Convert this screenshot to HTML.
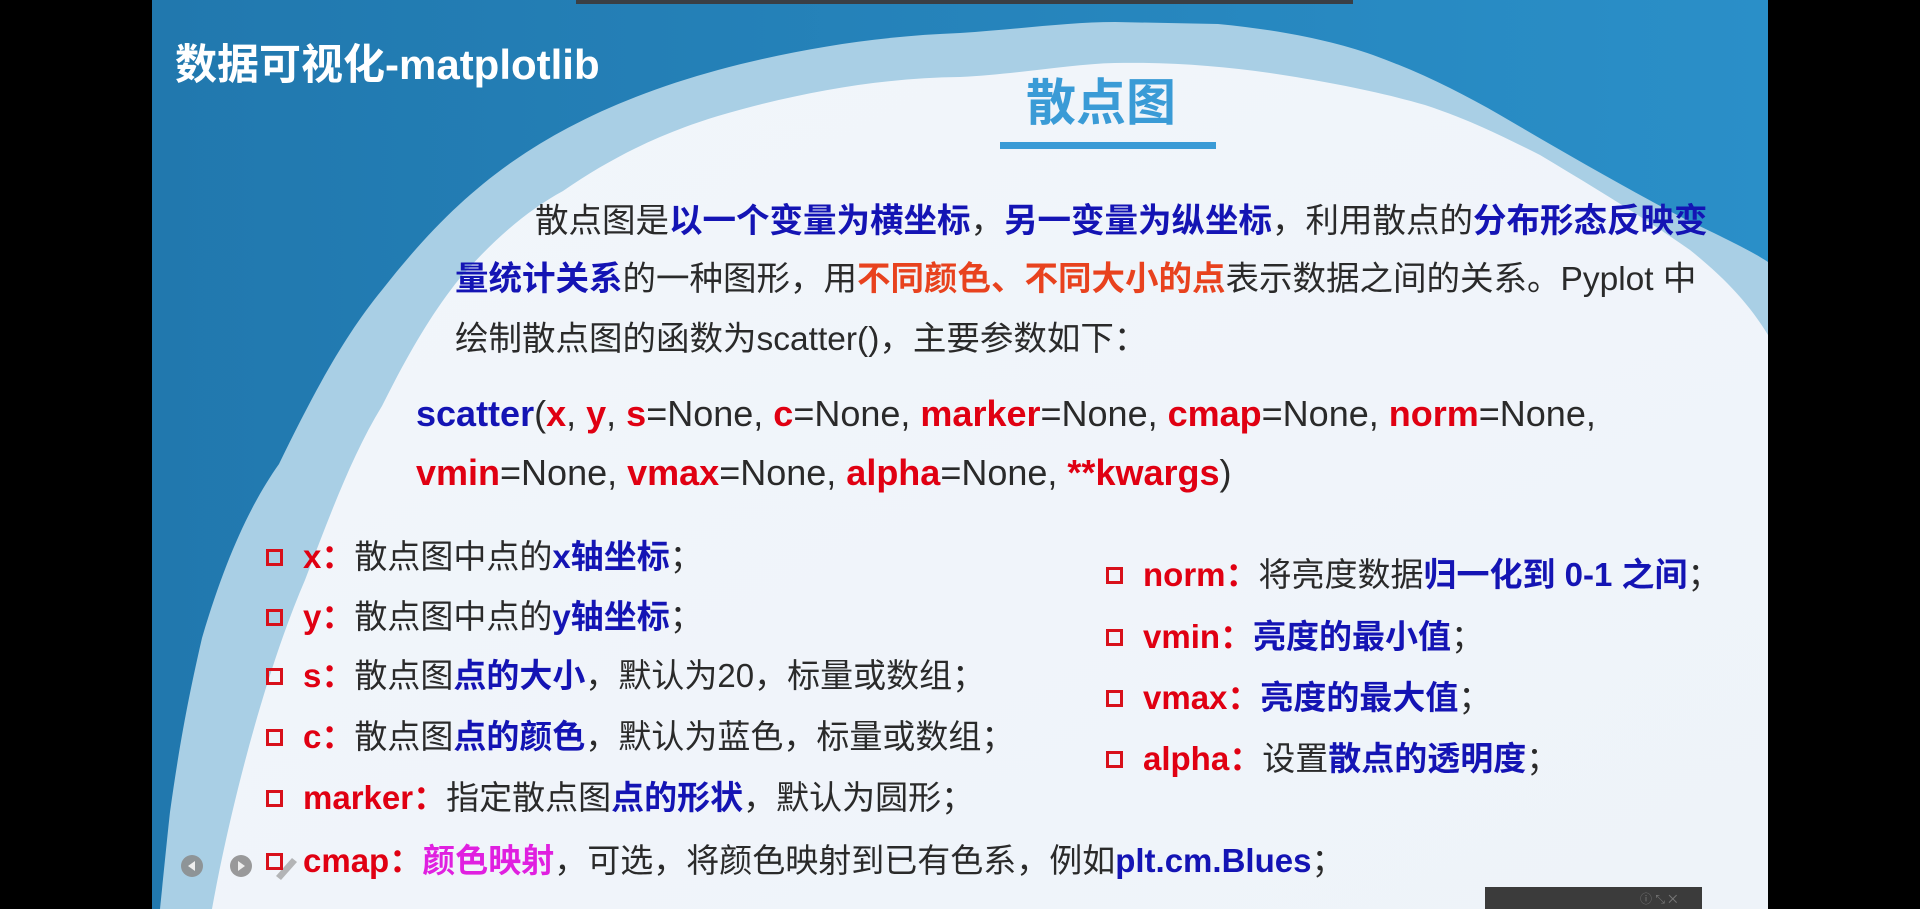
<!DOCTYPE html>
<html><head><meta charset="utf-8"><style>
html,body{margin:0;padding:0;background:#000;}
body{width:1920px;height:909px;position:relative;overflow:hidden;font-family:"Liberation Sans","Noto Sans CJK SC",sans-serif;}
.t{position:absolute;white-space:nowrap;font-size:33px;color:#2a2a2a;line-height:40px;}
.b{color:#1414b4;font-weight:bold;}
.r{color:#e00012;font-weight:bold;}
.o{color:#e8421e;font-weight:bold;}
.m{color:#e020e0;font-weight:bold;}
.sq{display:inline-block;width:11px;height:11px;border:3px solid #d8101a;margin-right:20px;vertical-align:2px;}
</style></head><body>
<svg width="1920" height="909" style="position:absolute;left:0;top:0">
<defs>
<linearGradient id="bg" x1="0" y1="0" x2="1" y2="0"><stop offset="0" stop-color="#2178ae"/><stop offset="1" stop-color="#2a8fc8"/></linearGradient>
<linearGradient id="wh" x1="0" y1="0" x2="1" y2="1"><stop offset="0" stop-color="#f2f6fb"/><stop offset="1" stop-color="#eef3f9"/></linearGradient>
</defs>
<rect x="152" y="0" width="1616" height="909" fill="url(#bg)"/>
<path d="M160 909 C165 860 168 830 170 812 C180 740 190 690 202 638 C225 560 250 505 279 464 C315 390 345 335 382 290 C425 235 465 195 512 162 C575 118 645 90 718 70 C800 48 880 36 960 33 C1020 29 1070 22 1115 22 L1218 24 C1280 30 1330 40 1373 55 C1420 72 1460 92 1500 115 C1560 150 1620 185 1683 218 C1720 236 1750 250 1768 262 L1768 909 Z" fill="#a9cfe5"/>
<path d="M212 909 C228 820 262 680 305 580 C330 515 352 455 382 406 C405 360 430 315 460 278 C495 238 528 210 563 191 C615 155 665 132 718 116 C800 92 880 78 960 77 C1020 74 1070 64 1115 63 C1170 62 1220 66 1270 73 C1330 82 1380 92 1425 105 C1470 120 1500 135 1540 155 C1590 185 1640 215 1690 250 C1725 278 1750 305 1768 335 L1768 909 Z" fill="url(#wh)"/>
<rect x="576" y="0" width="777" height="4" fill="#3a3f45"/>
<g fill="#8a8a8a" opacity="0.85">
<circle cx="192" cy="866" r="11"/><circle cx="241" cy="866" r="11"/>
</g>
<path d="M188 866 L195 861 L195 871 Z" fill="#eee"/><path d="M245 866 L238 861 L238 871 Z" fill="#eee"/>
<path d="M276 876 L292 858 L297 862 L281 880 Z" fill="#999" opacity="0.7"/>
<rect x="1485" y="887" width="217" height="22" fill="#3b3b3b"/>
<text x="1640" y="903" font-size="12" fill="#777" font-family="Liberation Sans">ⓘ ⤡ ✕</text>
</svg>
<div class="t" style="left:175px;top:40px;font-size:42px;font-weight:bold;color:#fff;line-height:50px">数据可视化-matplotlib</div>
<div class="t" style="left:1026px;top:74px;font-size:50px;font-weight:bold;color:#3a9bd6;line-height:58px">散点图</div>
<div style="position:absolute;left:1000px;top:142px;width:216px;height:7px;background:#3a9bd6"></div>
<div class="t" style="left:535px;top:202px;font-size:33.5px">散点图是<span class="b">以一个变量为横坐标</span>，<span class="b">另一变量为纵坐标</span>，利用散点的<span class="b">分布形态反映变</span></div>
<div class="t" style="left:455px;top:260px;font-size:33.5px"><span class="b">量统计关系</span>的一种图形，用<span class="o">不同颜色、不同大小的点</span>表示数据之间的关系。Pyplot 中</div>
<div class="t" style="left:455px;top:320px;font-size:33.5px">绘制散点图的函数为scatter()，主要参数如下：</div>
<div class="t" style="left:416px;top:394px;font-size:36px"><span class="b">scatter</span>(<span class="r">x</span>, <span class="r">y</span>, <span class="r">s</span>=None, <span class="r">c</span>=None, <span class="r">marker</span>=None, <span class="r">cmap</span>=None, <span class="r">norm</span>=None,</div>
<div class="t" style="left:416px;top:453px;font-size:36px"><span class="r">vmin</span>=None, <span class="r">vmax</span>=None, <span class="r">alpha</span>=None, <span class="r">**kwargs</span>)</div>
<div class="t" style="left:266px;top:537px"><span class="sq"></span><span class="r">x</span><span class="r">：</span>散点图中点的<span class="b">x轴坐标</span>；</div>
<div class="t" style="left:266px;top:597px"><span class="sq"></span><span class="r">y</span><span class="r">：</span>散点图中点的<span class="b">y轴坐标</span>；</div>
<div class="t" style="left:266px;top:656px"><span class="sq"></span><span class="r">s</span><span class="r">：</span>散点图<span class="b">点的大小</span>，默认为20，标量或数组；</div>
<div class="t" style="left:266px;top:717px"><span class="sq"></span><span class="r">c</span><span class="r">：</span>散点图<span class="b">点的颜色</span>，默认为蓝色，标量或数组；</div>
<div class="t" style="left:266px;top:778px"><span class="sq"></span><span class="r">marker</span><span class="r">：</span>指定散点图<span class="b">点的形状</span>，默认为圆形；</div>
<div class="t" style="left:266px;top:841px"><span class="sq"></span><span class="r">cmap</span><span class="r">：</span><span class="m">颜色映射</span>，可选，将颜色映射到已有色系，例如<span class="b">plt.cm.Blues</span>；</div>
<div class="t" style="left:1106px;top:555px"><span class="sq"></span><span class="r">norm</span><span class="r">：</span>将亮度数据<span class="b">归一化到 0-1 之间</span>；</div>
<div class="t" style="left:1106px;top:617px"><span class="sq"></span><span class="r">vmin</span><span class="r">：</span><span class="b">亮度的最小值</span>；</div>
<div class="t" style="left:1106px;top:678px"><span class="sq"></span><span class="r">vmax</span><span class="r">：</span><span class="b">亮度的最大值</span>；</div>
<div class="t" style="left:1106px;top:739px"><span class="sq"></span><span class="r">alpha</span><span class="r">：</span>设置<span class="b">散点的透明度</span>；</div>
</body></html>
